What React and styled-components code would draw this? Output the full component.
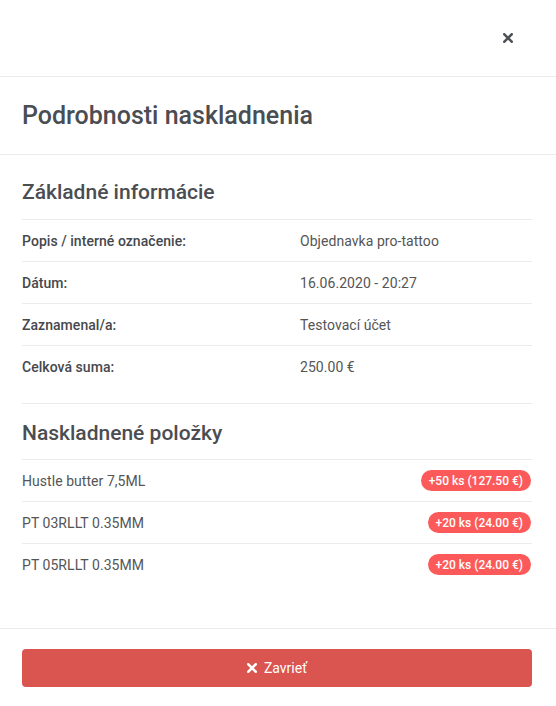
import React from "react";
import styled, { createGlobalStyle } from "styled-components";

const Global = createGlobalStyle`
  html, body { margin: 0; padding: 0; background: #fff; }
  body { font-family: Roboto, "Noto Sans", "Liberation Sans", sans-serif; color: #555; }
  * { box-sizing: border-box; }
`;

const Modal = styled.div`
  width: 556px;
  min-height: 706px;
  background: #fff;
  display: flex;
  flex-direction: column;
`;

const Header = styled.div`
  height: 77px;
  border-bottom: 1px solid #ebebeb;
  display: flex;
  align-items: center;
  justify-content: flex-end;
  padding: 0 38px 1px 0;
`;

const CloseBtn = styled.button`
  border: 0;
  background: transparent;
  padding: 0;
  width: 20px;
  height: 20px;
  display: flex;
  align-items: center;
  justify-content: center;
  cursor: pointer;
  color: #4f5257;
`;

const TitleBar = styled.div`
  height: 78px;
  border-bottom: 1px solid #ebebeb;
  display: flex;
  align-items: center;
  padding: 0 22px 0;
`;

const Title = styled.h2`
  margin: 0;
  font-size: 25px;
  font-weight: 500;
  line-height: 28px;
  color: #4a4d52;
`;

const Body = styled.div`
  padding: 0 24px 0 22px;
  flex: 1;
`;

const SectionTitle = styled.h3`
  margin: 0;
  padding: ${(p) => p.$top}px 0 ${(p) => p.$bottom}px;
  font-size: 21px;
  font-weight: 500;
  line-height: 24px;
  color: #4a4d52;
  border-top: ${(p) => (p.$divider ? "1px solid #ebebeb" : "0")};
`;

const InfoTable = styled.div`
  display: grid;
  grid-template-columns: 278px 1fr;
  margin-bottom: 16px;
`;

const Cell = styled.div`
  height: 42px;
  border-top: 1px solid #ebebeb;
  display: flex;
  align-items: center;
  font-size: 14px;
  letter-spacing: 0.05px;
  font-weight: ${(p) => (p.$label ? 500 : 400)};
  color: ${(p) => (p.$label ? "#45484d" : "#555")};
`;

const ItemList = styled.div`
  display: flex;
  flex-direction: column;
  margin-bottom: 42px;
`;

const ItemRow = styled.div`
  height: 42px;
  border-top: 1px solid #ebebeb;
  display: flex;
  align-items: center;
  justify-content: space-between;
  font-size: 14px;
  letter-spacing: 0.05px;
  color: #555;
`;

const Badge = styled.span`
  display: inline-flex;
  align-items: center;
  height: 21px;
  padding: 0 8px;
  border-radius: 11px;
  background: #fc5a5a;
  color: #fff;
  font-size: 12px;
  font-weight: 500;
  letter-spacing: 0;
  margin-right: 1px;
`;

const Footer = styled.div`
  border-top: 1px solid #ebebeb;
  padding: 20px 24px 19px 22px;
`;

const DangerButton = styled.button`
  width: 100%;
  height: 38px;
  border: 0;
  border-radius: 4px;
  background: #da5450;
  color: #fff;
  font-family: inherit;
  font-size: 14px;
  display: flex;
  align-items: center;
  justify-content: center;
  gap: 7px;
  cursor: pointer;
`;

const XIcon = ({ size = 10, weight = 2.6 }) => (
  <svg width={size} height={size} viewBox="0 0 10 10" aria-hidden="true">
    <path
      d="M1.3 1.3 L8.7 8.7 M8.7 1.3 L1.3 8.7"
      stroke="currentColor"
      strokeWidth={weight}
      strokeLinecap="square"
      fill="none"
    />
  </svg>
);

const info = [
  ["Popis / interné označenie:", "Objednavka pro-tattoo"],
  ["Dátum:", "16.06.2020 - 20:27"],
  ["Zaznamenal/a:", "Testovací účet"],
  ["Celková suma:", "250.00 €"],
];

const items = [
  ["Hustle butter 7,5ML", "+50 ks (127.50 €)"],
  ["PT 03RLLT 0.35MM", "+20 ks (24.00 €)"],
  ["PT 05RLLT 0.35MM", "+20 ks (24.00 €)"],
];

export default function App() {
  return (
    <>
      <Global />
      <Modal>
        <Header>
          <CloseBtn aria-label="Zavrieť">
            <XIcon size={10} weight={2.6} />
          </CloseBtn>
        </Header>
        <TitleBar>
          <Title>Podrobnosti naskladnenia</Title>
        </TitleBar>
        <Body>
          <SectionTitle $top={25} $bottom={15}>Základné informácie</SectionTitle>
          <InfoTable>
            {info.map(([k, v]) => (
              <React.Fragment key={k}>
                <Cell $label>{k}</Cell>
                <Cell>{v}</Cell>
              </React.Fragment>
            ))}
          </InfoTable>
          <SectionTitle $divider $top={17} $bottom={14}>Naskladnené položky</SectionTitle>
          <ItemList>
            {items.map(([n, b]) => (
              <ItemRow key={n}>
                <span>{n}</span>
                <Badge>{b}</Badge>
              </ItemRow>
            ))}
          </ItemList>
        </Body>
        <Footer>
          <DangerButton>
            <XIcon size={10} weight={2.6} />
            <span>Zavrieť</span>
          </DangerButton>
        </Footer>
      </Modal>
    </>
  );
}
